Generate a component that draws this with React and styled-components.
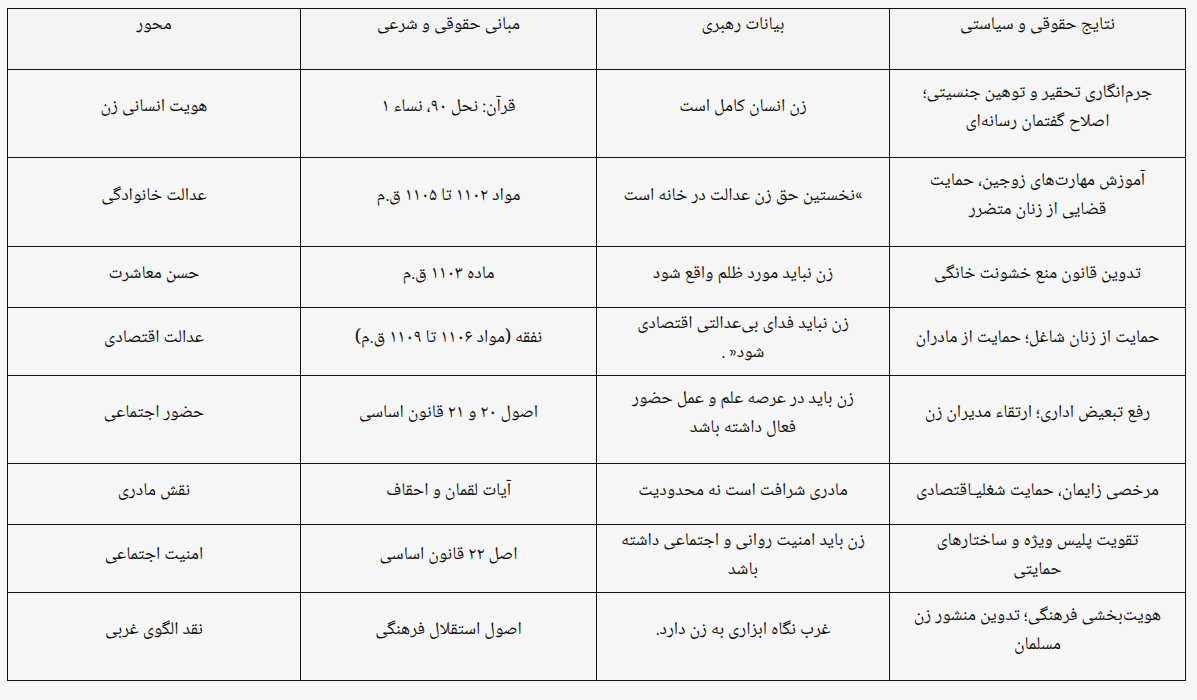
import React from "react";
import styled, { createGlobalStyle } from "styled-components";

const GlobalStyle = createGlobalStyle`
  html, body {
    margin: 0;
    padding: 0;
    background: #f6f6f6;
  }
  body {
    font-family: "Noto Naskh Arabic", "Noto Sans Arabic", "DejaVu Sans", sans-serif;
    color: #111;
  }
`;

const Page = styled.div`
  padding: 8px 0 0 7px;
  min-height: 700px;
  box-sizing: border-box;
`;

const Table = styled.table`
  border-collapse: collapse;
  table-layout: fixed;
  width: 1178px;
  direction: ltr;
  border: 1px solid #111;
  border-left-color: #777;
`;

const HeadRow = styled.tr`
  height: 61px;
  background: #f3f3f3;
`;

const Row = styled.tr`
  height: ${(p) => p.$h}px;
  background: #f6f6f6;
`;

const HeadCell = styled.th`
  border: 1px solid #111;
  font-weight: normal;
  font-size: 18px;
  line-height: 29px;
  text-align: center;
  vertical-align: top;
  padding: 2px 8px 0;
  direction: rtl;
`;

const Cell = styled.td`
  border: 1px solid #111;
  font-size: 18px;
  line-height: 29px;
  text-align: center;
  vertical-align: middle;
  padding: 0 8px ${(p) => (p.$tight ? 6 : 12)}px;
  direction: rtl;
`;

const Line = styled.span`
  display: block;
  white-space: nowrap;
`;

const cols = [293, 296, 293, 296];

const headers = ["محور", "مبانی حقوقی و شرعی", "بیانات رهبری", "نتایج حقوقی و سیاستی"];

const rows = [
  {
    h: 88,
    cells: [
      ["هویت انسانی زن"],
      ["قرآن: نحل ۹۰، نساء ۱"],
      ["زن انسان کامل است"],
      ["جرم‌انگاری تحقیر و توهین جنسیتی؛", "اصلاح گفتمان رسانه‌ای"],
    ],
  },
  {
    h: 89,
    cells: [
      ["عدالت خانوادگی"],
      ["مواد ۱۱۰۲ تا ۱۱۰۵ ق.م"],
      ["»نخستین حق زن عدالت در خانه است"],
      ["آموزش مهارت‌های زوجین، حمایت", "قضایی از زنان متضرر"],
    ],
  },
  {
    h: 61,
    cells: [
      ["حسن معاشرت"],
      ["ماده ۱۱۰۳ ق.م"],
      ["زن نباید مورد ظلم واقع شود"],
      ["تدوین قانون منع خشونت خانگی"],
    ],
  },
  {
    h: 68,
    cells: [
      ["عدالت اقتصادی"],
      ["نفقه (مواد ۱۱۰۶ تا ۱۱۰۹ ق.م)"],
      ["زن نباید فدای بی‌عدالتی اقتصادی", "شود« ."],
      ["حمایت از زنان شاغل؛ حمایت از مادران"],
    ],
  },
  {
    h: 88,
    cells: [
      ["حضور اجتماعی"],
      ["اصول ۲۰ و ۲۱ قانون اساسی"],
      ["زن باید در عرصه علم و عمل حضور", "فعال داشته باشد"],
      ["رفع تبعیض اداری؛ ارتقاء مدیران زن"],
    ],
  },
  {
    h: 61,
    cells: [
      ["نقش مادری"],
      ["آیات لقمان و احقاف"],
      ["مادری شرافت است نه محدودیت"],
      ["مرخصی زایمان، حمایت شغلیـاقتصادی"],
    ],
  },
  {
    h: 68,
    cells: [
      ["امنیت اجتماعی"],
      ["اصل ۲۲ قانون اساسی"],
      ["زن باید امنیت روانی و اجتماعی داشته", "باشد"],
      ["تقویت پلیس ویژه و ساختارهای", "حمایتی"],
    ],
  },
  {
    h: 88,
    cells: [
      ["نقد الگوی غربی"],
      ["اصول استقلال فرهنگی"],
      ["غرب نگاه ابزاری به زن دارد."],
      ["هویت‌بخشی فرهنگی؛ تدوین منشور زن", "مسلمان"],
    ],
  },
];

export default function App() {
  return (
    <Page>
      <GlobalStyle />
      <Table>
        <colgroup>
          {cols.map((w, i) => (
            <col key={i} style={{ width: w }} />
          ))}
        </colgroup>
        <thead>
          <HeadRow>
            {headers.map((h) => (
              <HeadCell key={h}>{h}</HeadCell>
            ))}
          </HeadRow>
        </thead>
        <tbody>
          {rows.map((r, i) => (
            <Row key={i} $h={r.h}>
              {r.cells.map((lines, j) => (
                <Cell key={j} $tight={r.h < 70}>
                  {lines.map((l, k) => (
                    <Line key={k}>{l}</Line>
                  ))}
                </Cell>
              ))}
            </Row>
          ))}
        </tbody>
      </Table>
    </Page>
  );
}
